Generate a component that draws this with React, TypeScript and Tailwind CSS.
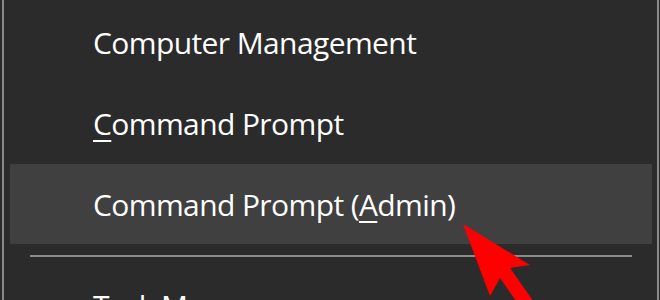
const items = [
  { label: "Computer Management" },
  { label: "Command Prompt", key: "C" },
  { label: "Command Prompt (Admin)", key: "A", active: true },
];

function Label({ text, hotkey }: { text: string; hotkey?: string }) {
  if (!hotkey) return <>{text}</>;
  const i = text.indexOf(hotkey);
  return (
    <>
      {text.slice(0, i)}
      <span className="underline decoration-2 underline-offset-[5px]">{hotkey}</span>
      {text.slice(i + 1)}
    </>
  );
}

export default function App() {
  return (
    <div
      className="relative w-[660px] h-[300px] overflow-hidden bg-[#2b2b2b] pl-[2px] pr-[1px]"
      style={{ fontFamily: '"Open Sans", "Noto Sans", sans-serif' }}
    >
      <div className="h-full border-x-2 border-[#8a8a8a] pt-[2px] pl-[6px] pr-[5px] text-white text-[30px] tracking-[-0.6px]">
        <div className="flex flex-col gap-[1px]">
          {items.map((item) => (
            <div
              key={item.label}
              className={`h-[80px] flex items-center pl-[83px] ${item.active ? "bg-[#404040]" : ""}`}
            >
              <Label text={item.label} hotkey={item.key} />
            </div>
          ))}
        </div>
        <div className="mt-[11px] mx-[20px] h-[2px] bg-[#8a8a8a]" />
        <div className="h-[80px] mt-[8px] flex items-center pl-[83px]">
          <Label text="Task Manager" hotkey="T" />
        </div>
      </div>

      <svg className="absolute left-0 top-0" width="660" height="300" viewBox="0 0 660 300">
        <polygon
          points="463,224 530,265 510,268 548,322 532,324 500,278 490,296"
          fill="#ff0000"
        />
      </svg>
    </div>
  );
}
